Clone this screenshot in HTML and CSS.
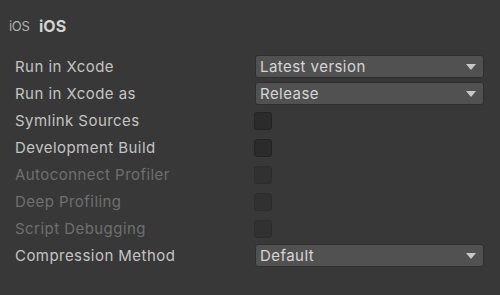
FILE: index.html
```html
<!DOCTYPE html>
<html lang="en">
<head>
    <meta charset="UTF-8">
    <meta name="viewport" content="width=device-width, initial-scale=1.0">
    <title>iOS Build Settings</title>
    <link rel="stylesheet" href="styles.css">
</head>
<body>
    <div class="panel">
        <div class="header">
            <span class="platform-icon">iOS</span>
            <span class="platform-name">iOS</span>
        </div>
        <div class="row">
            <label class="label">Run in Xcode</label>
            <div class="dropdown"><span>Latest version</span><span class="caret"></span></div>
        </div>
        <div class="row">
            <label class="label">Run in Xcode as</label>
            <div class="dropdown"><span>Release</span><span class="caret"></span></div>
        </div>
        <div class="row">
            <label class="label">Symlink Sources</label>
            <div class="field"><span class="checkbox"></span></div>
        </div>
        <div class="row">
            <label class="label">Development Build</label>
            <div class="field"><span class="checkbox"></span></div>
        </div>
        <div class="row disabled">
            <label class="label">Autoconnect Profiler</label>
            <div class="field"><span class="checkbox"></span></div>
        </div>
        <div class="row disabled">
            <label class="label">Deep Profiling</label>
            <div class="field"><span class="checkbox"></span></div>
        </div>
        <div class="row disabled">
            <label class="label">Script Debugging</label>
            <div class="field"><span class="checkbox"></span></div>
        </div>
        <div class="row">
            <label class="label">Compression Method</label>
            <div class="dropdown"><span>Default</span><span class="caret"></span></div>
        </div>
    </div>
</body>
</html>
```

FILE: styles.css
```css
body {
    margin: 0;
    background-color: #383838;
    font-family: Inter, "Noto Sans", sans-serif;
    color: #c4c4c4;
}
.panel {
    padding: 12px 16px 0 15px;
}
.header {
    display: flex;
    align-items: center;
    height: 28px;
    margin-bottom: 13px;
}
.platform-icon {
    width: 30px;
    margin-left: -6px;
    font-size: 13px;
    color: #b0b0b0;
    letter-spacing: -0.3px;
}
.platform-name {
    font-size: 16px;
    font-weight: 700;
    color: #d2d2d2;
}
.row {
    display: flex;
    align-items: center;
    height: 27px;
    font-size: 15px;
    letter-spacing: 0.45px;
}
.label {
    width: 240px;
}
.disabled .label {
    color: #6f6f6f;
}
.field {
    flex: 1;
    display: flex;
}
.dropdown {
    flex: 1;
    display: flex;
    align-items: center;
    justify-content: space-between;
    height: 21px;
    padding: 0 7px 0 4px;
    background-color: #515151;
    border: 1px solid #2f2f2f;
    border-radius: 3px;
    color: #d6d6d6;
}
.caret {
    width: 0;
    height: 0;
    border-left: 5px solid transparent;
    border-right: 5px solid transparent;
    border-top: 6px solid #c8c8c8;
}
.checkbox {
    width: 16px;
    height: 16px;
    margin-left: -1px;
    background-color: #2b2b2b;
    border: 1px solid #232323;
    border-radius: 3px;
}
.disabled .checkbox {
    background-color: #313131;
    border-color: #2c2c2c;
}
```
